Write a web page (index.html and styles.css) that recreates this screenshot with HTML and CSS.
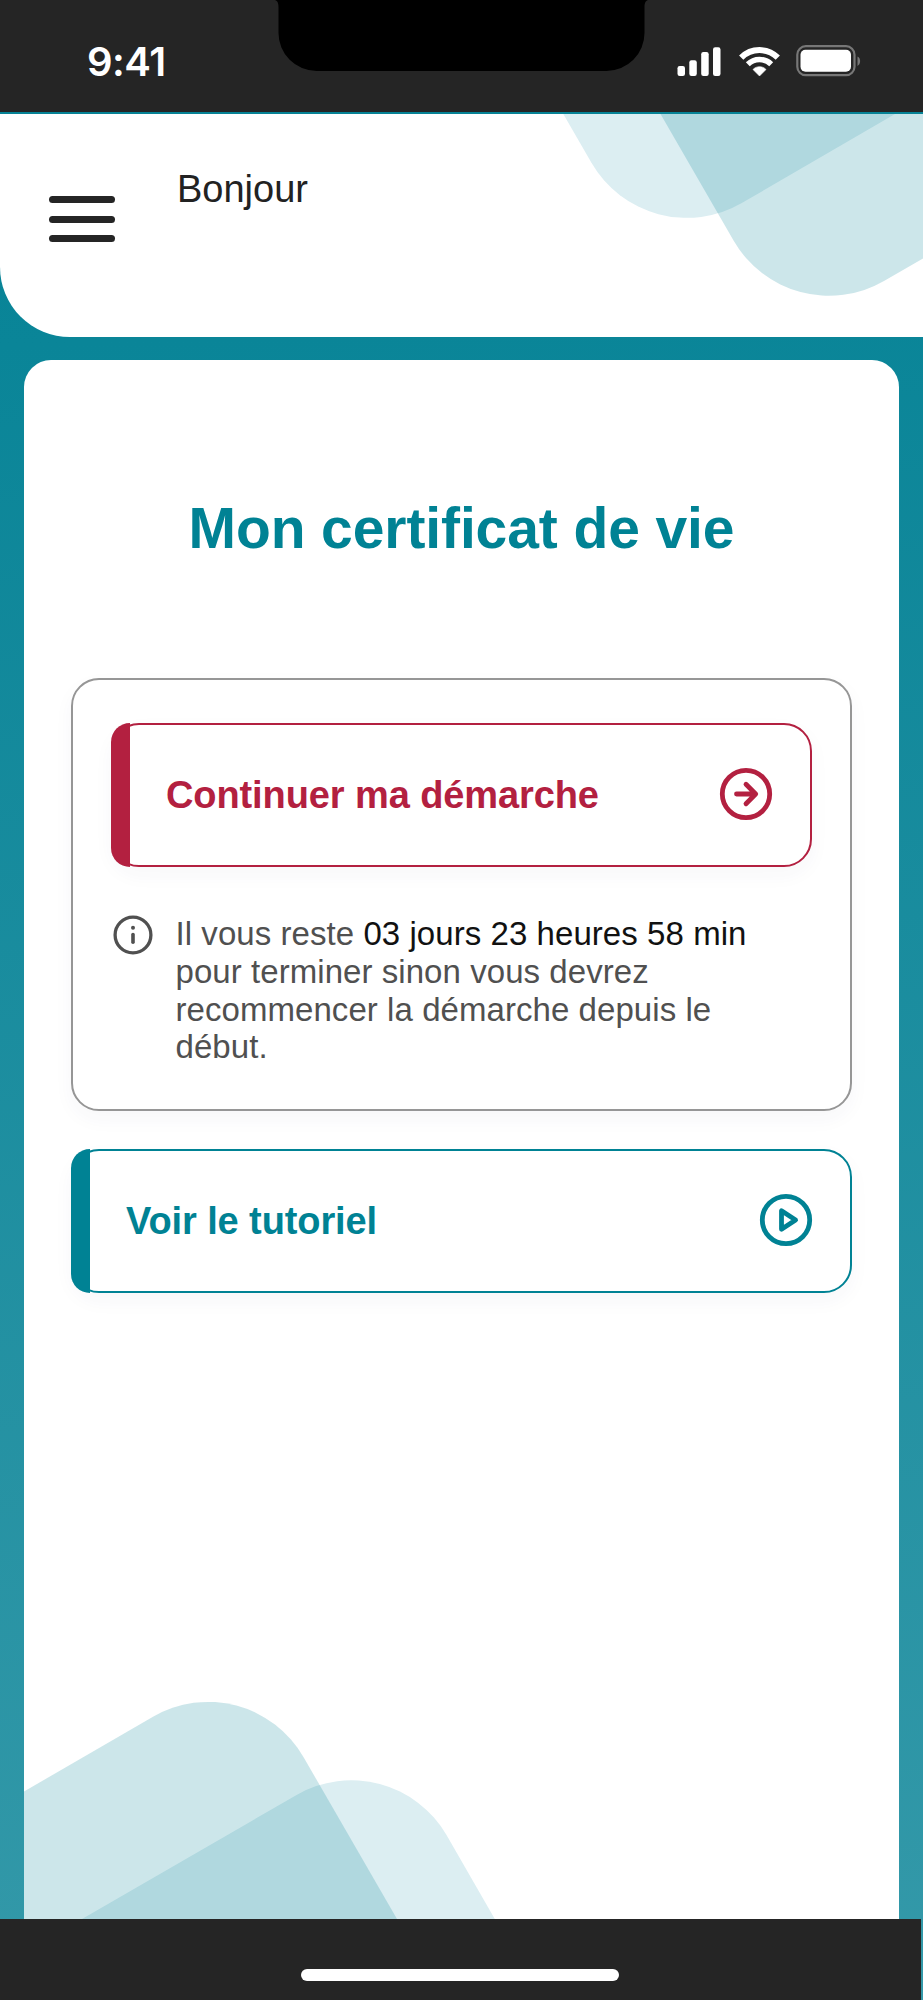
FILE: index.html
```html
<!DOCTYPE html>
<html lang="fr">
<head>
    <meta charset="UTF-8">
    <meta name="viewport" content="width=device-width, initial-scale=1.0">
    <title>Mon certificat de vie</title>
    <link rel="stylesheet" href="styles.css">
</head>
<body>
    <div class="statusbar">
        <svg class="notch" width="375" height="72" viewBox="0 0 375 72">
            <path d="M0 0C3 0 4.500 2.500 4.500 7V33A38 38 0 0 0 42.500 71H332.500A38 38 0 0 0 370.500 33V7C370.500 2.500 372 0 375 0Z"/>
        </svg>
        <span class="time">9:41</span>
        <svg class="status-icons" width="186" height="34" viewBox="0 0 186 34" fill="#fff">
            <rect x="1.500" y="22" width="7.500" height="10" rx="2.200"/>
            <rect x="13.300" y="16.300" width="7.500" height="15.700" rx="2.200"/>
            <rect x="25.200" y="8" width="7.500" height="24" rx="2.200"/>
            <rect x="37" y="3.300" width="7.500" height="28.700" rx="2.200"/>
            <g fill="none" stroke="#fff">
                <path d="M65.200 13.700A25.800 25.800 0 0 1 101.800 13.700" stroke-width="6"/>
                <path d="M71.800 20.300A16.600 16.600 0 0 1 95.200 20.300" stroke-width="5.500"/>
            </g>
            <path d="M83.500 32L77 25.500C80.500 21.700 86.500 21.700 90 25.500Z" stroke="#fff" stroke-width=".6" stroke-linejoin="round"/>
            <rect x="121.300" y="2.200" width="57.200" height="29" rx="8.500" fill="none" stroke="#777" stroke-width="2.200"/>
            <rect x="124.500" y="5.700" width="50.500" height="22" rx="5"/>
            <path d="M181.500 12.500C185 14 185 20 181.500 22Z" fill="#777"/>
        </svg>
    </div>

    <header class="header">
        <svg class="header-shapes" width="370" height="183" viewBox="553 114 370 183">
            <path class="shape-light" d="M563.300 114L591.600 163A110 110 0 0 0 741.800 203.100L895 114Z"/>
            <path class="shape-dark" d="M660.500 114L733.700 240.800A110 110 0 0 0 884 281L923 258.500V114Z"/>
        </svg>
        <div class="burger">
            <span></span>
            <span></span>
            <span></span>
        </div>
        <p class="hello">Bonjour</p>
    </header>

    <main class="content">
        <h1>Mon certificat de vie</h1>

        <section class="panel">
            <a class="btn btn-red">
                <span>Continuer ma démarche</span>
                <svg class="icon" width="54" height="54" viewBox="0 0 54 54">
                    <circle cx="27" cy="27" r="23.700"/>
                    <path d="M17.500 27H36.500M27 17.300L36.700 27L27 36.700"/>
                </svg>
            </a>
            <div class="info">
                <svg class="info-icon" width="40" height="40" viewBox="0 0 40 40">
                    <circle cx="20" cy="20" r="17.900" fill="none" stroke="#505050" stroke-width="3.300"/>
                    <circle cx="20" cy="12.800" r="2" fill="#505050"/>
                    <path d="M20 19.500V27.300" stroke="#505050" stroke-width="3.600" stroke-linecap="round"/>
                </svg>
                <p>Il vous reste <span class="delay">03 jours 23 heures 58 min</span> pour terminer sinon vous devrez recommencer la démarche depuis le début.</p>
            </div>
        </section>

        <a class="btn btn-teal">
            <span>Voir le tutoriel</span>
            <svg class="icon" width="54" height="54" viewBox="0 0 54 54">
                <circle cx="27" cy="27" r="23.700"/>
                <path d="M22.500 17.700V36.300L36.600 27Z"/>
            </svg>
        </a>

        <svg class="content-shapes" width="480" height="219" viewBox="24 1700 480 219">
            <path class="shape-light" d="M82 1919L296.600 1794.900A110 110 0 0 1 446.500 1835L494.800 1919Z"/>
            <path class="shape-dark" d="M24 1791.500L153 1716.700A110 110 0 0 1 303.300 1756.700L397 1919H24Z"/>
        </svg>
    </main>

    <footer class="homebar">
        <span class="indicator"></span>
    </footer>
</body>
</html>
```

FILE: styles.css
```css
* {
    box-sizing: border-box;
}
body {
    margin: 0;
    height: 2000px;
    display: flex;
    flex-direction: column;
    font-family: "Liberation Sans", Arial, sans-serif;
    color: #222;
    background: linear-gradient(178deg, #048194 0%, #0a8598 17%, #3499a9 100%);
    overflow: hidden;
}
h1, p {
    margin: 0;
}

/* barre de statut */
.statusbar {
    position: relative;
    flex: none;
    display: flex;
    justify-content: space-between;
    align-items: flex-start;
    height: 111.5px;
    padding: 43px 61.5px 0 87px;
    background-color: #252525;
}
.notch {
    position: absolute;
    top: 0;
    left: 274px;
}
.time {
    font-family: Inter, sans-serif;
    font-size: 40px;
    font-weight: 600;
    line-height: 38px;
    letter-spacing: -0.5px;
    color: #fff;
}
.status-icons {
    margin-top: 1px;
}

/* en-tête */
.header {
    position: relative;
    flex: none;
    display: flex;
    align-items: flex-start;
    height: 222.5px;
    margin-top: 2.5px;
    padding-left: 49px;
    background-color: #fff;
    border-bottom-left-radius: 70px;
}
.header-shapes {
    position: absolute;
    top: 0;
    right: 0;
}
.shape-light {
    fill: #dceef2;
}
.shape-dark {
    fill: rgba(0, 130, 148, 0.2);
}
.burger {
    display: flex;
    flex-direction: column;
    gap: 12.8px;
    width: 65.5px;
    margin-top: 82.2px;
}
.burger span {
    height: 6.8px;
    border-radius: 4px;
    background-color: #252525;
}
.hello {
    margin: 54px 0 0 62.5px;
    font-size: 38px;
    line-height: 43px;
}

/* contenu */
.content {
    position: relative;
    flex: 1;
    margin: 23.5px 24px 0;
    padding: 135px 47px 0;
    background-color: #fff;
    border-radius: 27px 27px 0 0;
}
h1 {
    font-size: 57px;
    line-height: 66px;
    letter-spacing: -0.1px;
    text-align: center;
    color: #008294;
}
.panel {
    height: 433px;
    margin-top: 117px;
    padding: 43px 38px 0;
    border: 2px solid #969696;
    border-radius: 28px;
    box-shadow: 0 8px 20px rgba(40, 40, 90, 0.04);
}
.btn {
    position: relative;
    display: flex;
    justify-content: space-between;
    align-items: center;
    height: 144px;
    padding: 0 37px 2px 53px;
    border: 2px solid;
    border-radius: 28px;
    background-color: #fff;
    box-shadow: 0 8px 20px rgba(40, 40, 90, 0.04);
    font-size: 38px;
    font-weight: bold;
    letter-spacing: -0.1px;
}
.btn span {
    padding-top: 3px;
}
.btn::before {
    content: "";
    position: absolute;
    top: -2px;
    bottom: -2px;
    left: -2px;
    width: 19px;
    border-radius: 19px 0 0 19px;
    background-color: currentColor;
}
.btn-red {
    color: #b32040;
}
.btn-teal {
    margin-top: 38px;
    color: #008294;
}
.icon {
    fill: none;
    stroke: currentColor;
    stroke-width: 4.8px;
    stroke-linecap: round;
    stroke-linejoin: round;
}
.info {
    display: flex;
    align-items: flex-start;
    margin-top: 48px;
    color: #505050;
}
.info-icon {
    flex: none;
    margin-left: 1.5px;
}
.info p {
    max-width: 600px;
    margin-left: 23px;
    font-size: 33px;
    line-height: 37.8px;
    letter-spacing: 0.06px;
}
.delay {
    color: #111;
}
.content-shapes {
    position: absolute;
    left: 0;
    bottom: 0;
}

/* barre du bas */
.homebar {
    flex: none;
    display: flex;
    justify-content: center;
    width: 920.5px;
    height: 81px;
    padding-top: 50px;
    background-color: #252525;
}
.indicator {
    width: 318px;
    height: 12px;
    border-radius: 6px;
    background-color: #fff;
}
```
